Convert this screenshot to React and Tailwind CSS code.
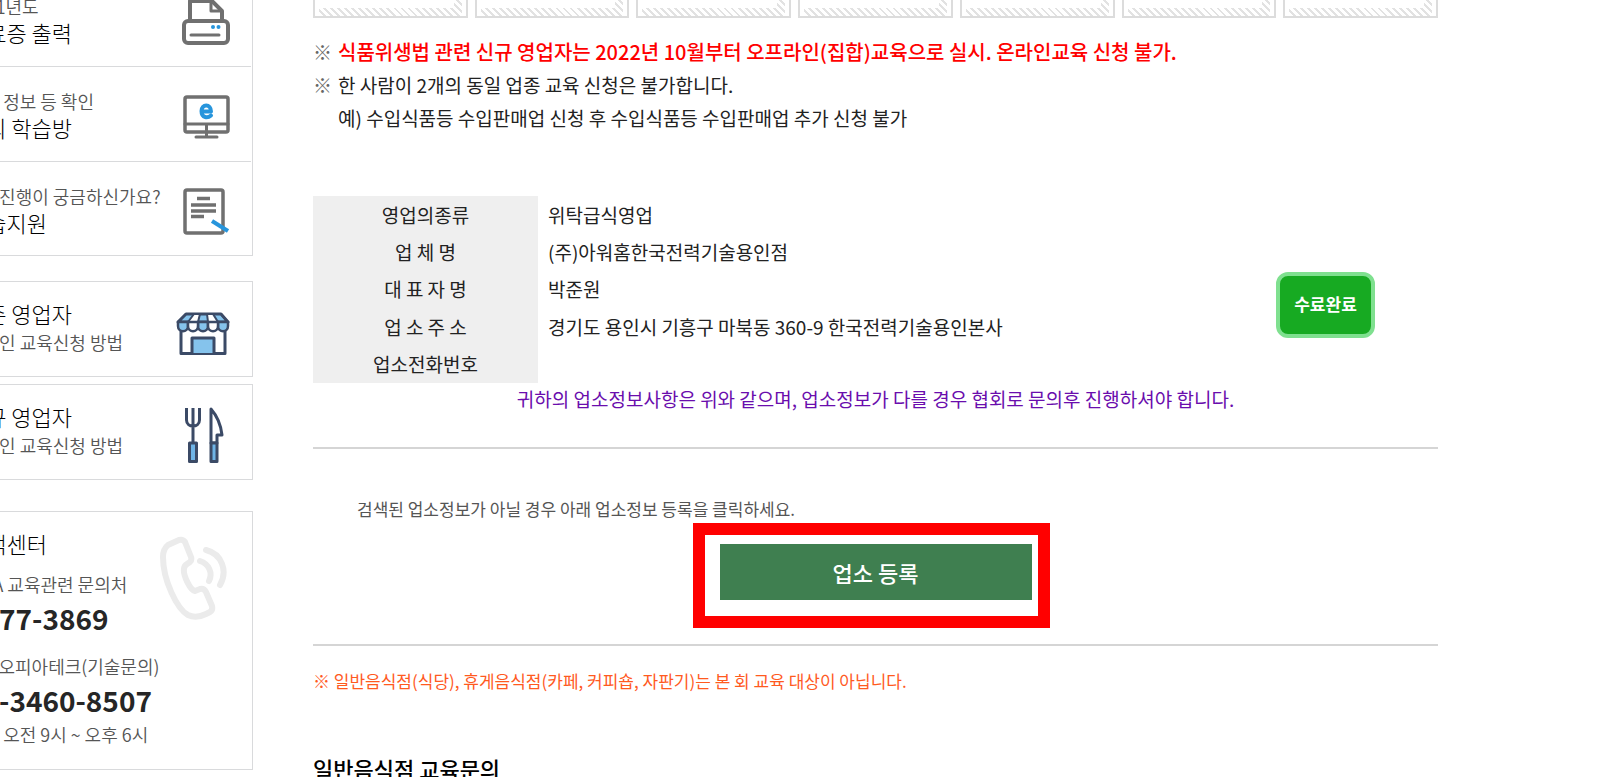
const steps = [1, 2, 3, 4, 5, 6, 7]

const shopInfo = [
    { label: '영업의종류', value: '위탁급식영업' },
    { label: '업 체 명', value: '(주)아워홈한국전력기술용인점' },
    { label: '대 표 자 명', value: '박준원' },
    { label: '업 소 주 소', value: '경기도 용인시 기흥구 마북동 360-9 한국전력기술용인본사' },
    { label: '업소전화번호', value: '' },
]

function PrinterIcon() {
    return (
        <svg width="50" height="52" viewBox="0 0 50 52" fill="none" stroke="#707070" strokeWidth="4" strokeLinejoin="round" strokeLinecap="round">
            <path d="M9 27V7H31L41 17V27" />
            <path d="M30 8V17H40" strokeWidth="3" />
            <rect x="3" y="27" width="44" height="22" rx="4" />
            <path d="M10 41H38" strokeWidth="3" />
            <circle cx="32" cy="33" r="2" fill="#2795dc" stroke="none" />
            <circle cx="37.500" cy="33" r="2" fill="#2795dc" stroke="none" />
        </svg>
    )
}

function MonitorIcon() {
    return (
        <svg width="50" height="52" viewBox="0 -4 50 52" fill="none" stroke="#707070" strokeWidth="3.500" strokeLinejoin="round" strokeLinecap="round">
            <rect x="4" y="4" width="43" height="35" rx="2" />
            <path d="M4 31H47M25.500 32V43M15 44H36" strokeWidth="3" />
            <path d="M20.500 18.500H30C30 10.500 20.500 10.500 20.500 18C20.500 25.500 27 25 30 22.500" stroke="#2795dc" strokeWidth="4" />
        </svg>
    )
}

function NoteIcon() {
    return (
        <svg width="50" height="52" viewBox="0 -2 50 52" fill="none" stroke="#707070" strokeWidth="3.500">
            <rect x="4" y="4" width="38" height="43" rx="2" />
            <path d="M16 12.500H29M10 19H35M10 25H35M10 30.500H23" />
            <path d="M31 35L47 45" stroke="#2795dc" strokeWidth="4" />
        </svg>
    )
}

function StoreIcon() {
    return (
        <svg width="54" height="44" viewBox="0 0 54 44" fill="none" stroke="#3b4a66" strokeWidth="3" strokeLinejoin="round">
            <path d="M5 18V41.500H49V18" fill="#fff" />
            <path d="M16 41V26H38V41" fill="#85c3ec" />
            <path d="M10 2H45L52 10H2Z" fill="#85c3ec" />
            <path d="M18 2H24L22 10H12ZM31 2H37L42 10H32Z" fill="#fff" stroke="none" />
            <path d="M10 2H45L52 10H2ZM18 2L12 10M24 2L22 10M31 2L32 10M37 2L42 10" strokeWidth="2" />
            <path d="M2 10H12V14C12 21 2 21 2 14ZM22 10H32V14C32 21 22 21 22 14ZM42 10H52V14C52 21 42 21 42 14Z" fill="#85c3ec" strokeWidth="2.500" />
            <path d="M12 10H22V14C22 21 12 21 12 14ZM32 10H42V14C42 21 32 21 32 14Z" fill="#fff" strokeWidth="2.500" />
        </svg>
    )
}

function CutleryIcon() {
    return (
        <svg width="40" height="58" viewBox="0 0 40 58" fill="none" stroke="#3b4a66" strokeWidth="3" strokeLinejoin="round">
            <path d="M2.500 3V15C2.500 23 15.500 23 15.500 15V3M9 3V38" />
            <rect x="5.500" y="38" width="7" height="18.500" fill="#6fb4e6" />
            <path d="M27 38V4C34 12 37 21 38 30H33V38Z" />
            <rect x="27" y="38" width="6" height="18.500" fill="#6fb4e6" />
        </svg>
    )
}

function PhoneIcon() {
    return (
        <svg className="shrink-0" width="68" height="86" viewBox="0 0 68 86" fill="none" stroke="#ebebeb" strokeWidth="6" strokeLinecap="round" strokeLinejoin="round">
            <path d="M19 5L8 10Q3 14 3 22C3 45 17 74 28 80Q36 84 46 79L50 77Q53 75 52 71L46 57Q44 53 40 54L35 56C30 55 23 40 24 34Q24 31 27 29L30 27Q32 25 31 22L25 7Q23 4 19 5Z" />
            <path d="M40 26C49 29 53 38 49 46" />
            <path d="M46 15C62 19 68 36 60 50" />
        </svg>
    )
}

function QuickLink({ small, big, icon }) {
    return (
        <li className="mr-px border-b border-[#d9dadc] last:-mb-px last:border-b-0">
            <a href="#" className="flex items-center justify-between pt-[22px] pb-5 pl-[22px] pr-5">
                <span className="flex flex-col">
                    <span className="text-[18px] leading-6 font-[350] text-[#555]">{small}</span>
                    <span className="text-[22px] leading-7 text-black">{big}</span>
                </span>
                {icon}
            </a>
        </li>
    )
}

function GuideCard({ title, icon }) {
    return (
        <a href="#" className="flex items-end justify-between border border-[#d9dadc] py-4 pl-[22px] pr-[22px]">
            <span className="flex flex-col gap-0.5 self-start">
                <span className="text-[22px] leading-[30px] text-black">{title}</span>
                <span className="text-[18px] leading-6 font-[350] text-[#555]">온라인 교육신청 방법</span>
            </span>
            <span className="flex h-[62px] flex-col justify-end">{icon}</span>
        </a>
    )
}

function Sidebar() {
    return (
        <aside className="-ml-[57px] -mt-7 w-[310px] shrink-0 whitespace-nowrap font-light">
            <ul className="border border-t-0 border-[#d9dadc]">
                <QuickLink small="2021년도" big="수료증 출력" icon={<PrinterIcon />} />
                <QuickLink small="수강 정보 등 확인" big="나의 학습방" icon={<MonitorIcon />} />
                <QuickLink small="학습진행이 궁금하신가요?" big="학습지원" icon={<NoteIcon />} />
            </ul>

            <div className="mt-[25px] flex flex-col gap-[7px]">
                <GuideCard title="기존 영업자" icon={<span className="pb-1"><StoreIcon /></span>} />
                <GuideCard title="신규 영업자" icon={<span className="pr-1.5"><CutleryIcon /></span>} />
            </div>

            <section className="mt-[31px] flex items-start justify-between border border-[#d9dadc] pt-4 pb-[23px] pl-[22px] pr-6">
                <div className="w-0 grow text-[18px] leading-6 font-[350] text-[#555]">
                    <h2 className="text-[22px] leading-[30px] font-light text-black">고객센터</h2>
                    <p className="mt-3.5">KFIA 교육관련 문의처</p>
                    <p className="mt-1 text-[28px] leading-9 font-bold text-[#262626]">1577-3869</p>
                    <p className="mt-[18px]">(주) 오피아테크(기술문의)</p>
                    <p className="mt-1 text-[28px] leading-9 font-bold text-[#262626]">02-3460-8507</p>
                    <p className="mt-1">평일 오전 9시 ~ 오후 6시</p>
                </div>
                <div className="pt-[7px]"><PhoneIcon /></div>
            </section>
        </aside>
    )
}

export default function App() {
    return (
        <div className="flex overflow-hidden bg-white font-['Noto_Sans_CJK_KR',sans-serif] text-[#222]">
            <Sidebar />

            <main className="ml-[60px] mr-[159px] min-w-0 grow">
                <div className="grid grid-cols-7 gap-[7px]">
                    {steps.map(n => (
                        <div key={n} className="h-[18px] border-2 border-t-0 border-[#dcdcdc] px-1">
                            <div className="h-full bg-[repeating-linear-gradient(45deg,#fff_0,#fff_3px,#e2e2e2_3px,#e2e2e2_5px)] pr-2 pb-2">
                                <div className="h-full bg-white" />
                            </div>
                        </div>
                    ))}
                </div>

                <ul className="mt-[17px] text-[19px] leading-[33px]">
                    <li className="flex gap-1.5">
                        <span className="text-[#666]">※</span>
                        <strong className="text-[20px] font-medium text-[#f00]">식품위생법 관련 신규 영업자는 2022년 10월부터 오프라인(집합)교육으로 실시. 온라인교육 신청 불가.</strong>
                    </li>
                    <li className="flex gap-1.5">
                        <span className="text-[#666]">※</span>
                        <span>
                            한 사람이 2개의 동일 업종 교육 신청은 불가합니다.<br />
                            예) 수입식품등 수입판매업 신청 후 수입식품등 수입판매업 추가 신청 불가
                        </span>
                    </li>
                </ul>

                <table className="mt-[62px] h-[187px] w-full text-[19px] leading-7">
                    <tbody>
                        {shopInfo.map((row, i) => (
                            <tr key={row.label}>
                                <th className="w-1/5 bg-[#efefef] p-0 font-normal">{row.label}</th>
                                <td className="px-2.5 py-0">{row.value}</td>
                                {i === 0 && (
                                    <td rowSpan={5} className="w-1/5 p-0 pt-[30px] text-center">
                                        <span className="inline-block rounded-xl border-4 border-[#7fe08f] bg-[#17aa22] px-3.5 pt-3.5 pb-4 text-[17px] font-bold text-white">수료완료</span>
                                    </td>
                                )}
                            </tr>
                        ))}
                    </tbody>
                </table>
                <p className="text-center text-[19px] leading-8 text-[#6a0dad]">
                    귀하의 업소정보사항은 위와 같으며, 업소정보가 다를 경우 협회로 문의후 진행하셔야 합니다.
                </p>

                <section className="mt-8 border-y-2 border-[#d5d5d5] pt-12 pb-11">
                    <p className="pl-11 text-[17px] leading-6 text-[#555]">검색된 업소정보가 아닐 경우 아래 업소정보 등록을 클릭하세요.</p>
                    <div className="relative mx-auto mt-[23px] w-[312px]">
                        <button type="button" className="block h-14 w-full bg-[#3f7f50] text-[22px] font-medium text-white">업소 등록</button>
                        <div className="pointer-events-none absolute -top-[21px] -right-[18px] -bottom-7 -left-[27px] border-12 border-[#f00]" />
                    </div>
                </section>

                <p className="mt-[23px] text-[17px] leading-6 text-[#ff5a1f]">※ 일반음식점(식당), 휴게음식점(카페, 커피숍, 자판기)는 본 회 교육 대상이 아닙니다.</p>
                <h2 className="mt-[59px] text-[22px] leading-8 font-medium text-black">일반음식점 교육문의</h2>
            </main>
        </div>
    )
}
